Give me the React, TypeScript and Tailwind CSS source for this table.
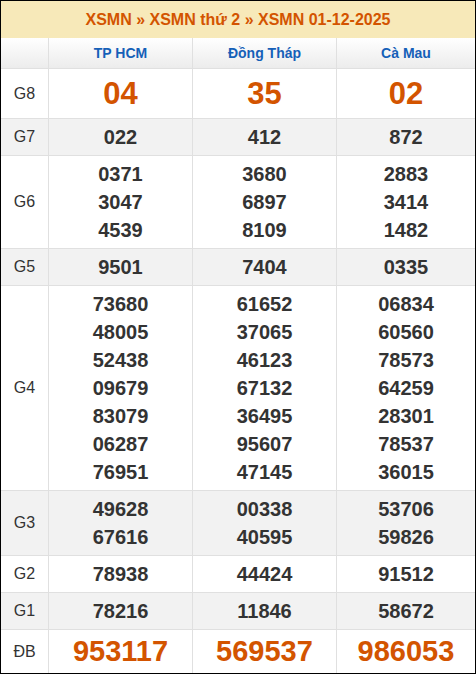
const provinces = ["TP HCM", "Đồng Tháp", "Cà Mau"];

type Prize = {
  label: string;
  values: string[][];
  kind?: "big" | "db";
};

const prizes: Prize[] = [
  { label: "G8", values: [["04"], ["35"], ["02"]], kind: "big" },
  { label: "G7", values: [["022"], ["412"], ["872"]] },
  {
    label: "G6",
    values: [
      ["0371", "3047", "4539"],
      ["3680", "6897", "8109"],
      ["2883", "3414", "1482"],
    ],
  },
  { label: "G5", values: [["9501"], ["7404"], ["0335"]] },
  {
    label: "G4",
    values: [
      ["73680", "48005", "52438", "09679", "83079", "06287", "76951"],
      ["61652", "37065", "46123", "67132", "36495", "95607", "47145"],
      ["06834", "60560", "78573", "64259", "28301", "78537", "36015"],
    ],
  },
  {
    label: "G3",
    values: [
      ["49628", "67616"],
      ["00338", "40595"],
      ["53706", "59826"],
    ],
  },
  { label: "G2", values: [["78938"], ["44424"], ["91512"]] },
  { label: "G1", values: [["78216"], ["11846"], ["58672"]] },
  { label: "ĐB", values: [["953117"], ["569537"], ["986053"]], kind: "db" },
];

export default function App() {
  return (
    <div
      className="w-[476px] border border-black bg-white"
      style={{ fontFamily: '"Liberation Sans", Arial, sans-serif' }}
    >
      <div className="h-[37px] bg-[#f7e9b9] flex items-center justify-center text-[16px] font-bold text-[#d35400]">
        XSMN » XSMN thứ 2 » XSMN 01-12-2025
      </div>

      {/* province header */}
      <div className="grid grid-cols-[47px_144px_144px_1fr] border-b border-[#e0e0e0] bg-gradient-to-b from-white to-[#ececec]">
        <div className="h-[30px]" />
        {provinces.map((p) => (
          <div
            key={p}
            className="h-[30px] border-l border-[#e0e0e0] flex items-center justify-center text-[14px] font-bold text-[#1560b8]"
          >
            {p}
          </div>
        ))}
      </div>

      {prizes.map((row, i) => {
        const shaded = i % 2 === 1;
        const last = i === prizes.length - 1;
        return (
          <div
            key={row.label}
            className={`grid grid-cols-[47px_144px_144px_1fr] ${
              last ? "" : "border-b border-[#e0e0e0]"
            } ${shaded ? "bg-[#f2f2f2]" : "bg-white"}`}
          >
            <div className="flex items-center justify-center text-[16px] text-[#333]">
              {row.label}
            </div>
            {row.values.map((vals, j) => (
              <div
                key={j}
                className="border-l border-[#e0e0e0] py-1 flex flex-col items-center justify-center"
              >
                {vals.map((v) =>
                  row.kind === "big" ? (
                    <div
                      key={v}
                      className="text-[31px] leading-[41px] font-bold text-[#d35400]"
                    >
                      {v}
                    </div>
                  ) : row.kind === "db" ? (
                    <div
                      key={v}
                      className="text-[29px] leading-[35px] font-bold text-[#d35400]"
                    >
                      {v}
                    </div>
                  ) : (
                    <div
                      key={v}
                      className="text-[20px] leading-[28px] font-bold text-[#333]"
                    >
                      {v}
                    </div>
                  )
                )}
              </div>
            ))}
          </div>
        );
      })}
    </div>
  );
}
